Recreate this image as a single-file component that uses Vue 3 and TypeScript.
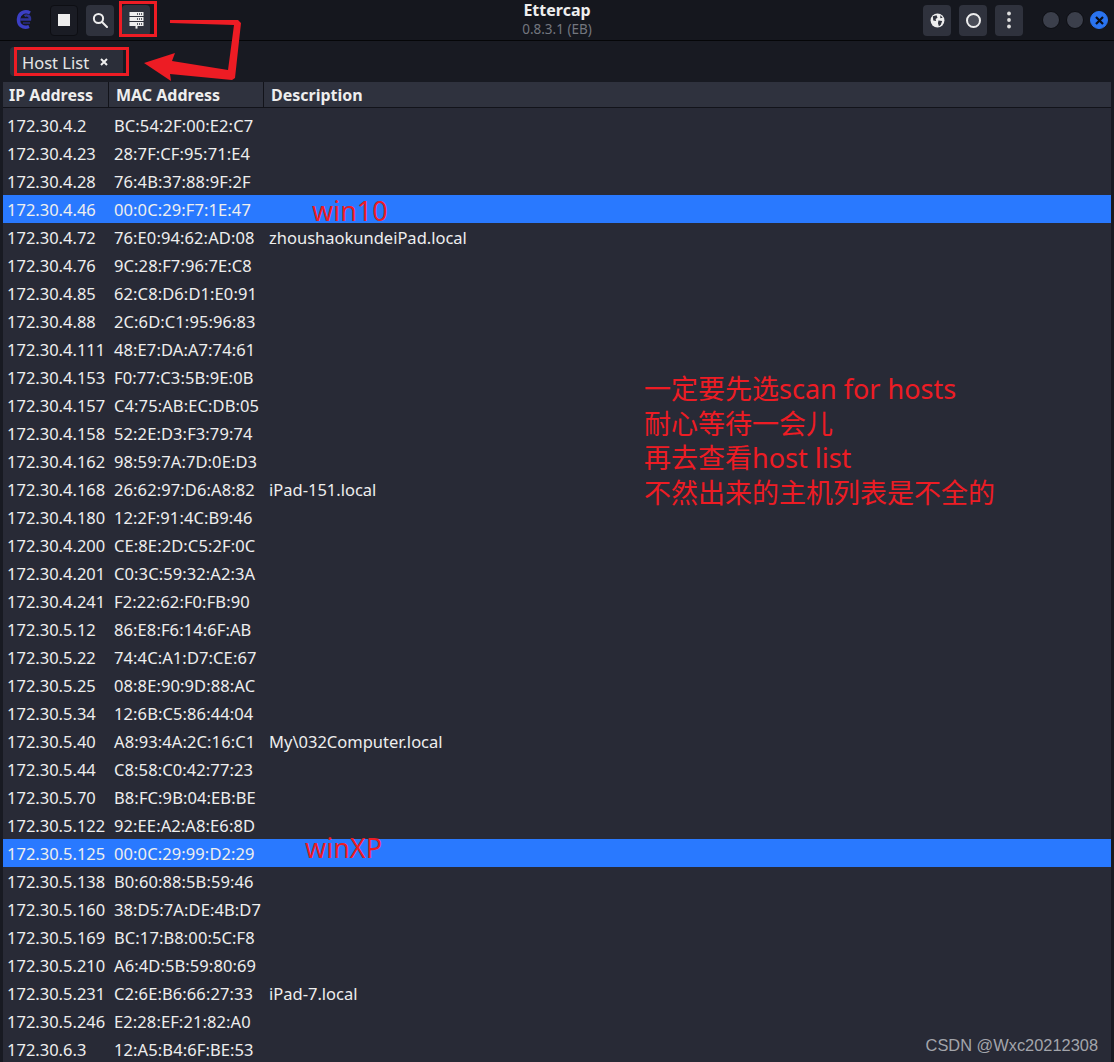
<template>
  <div class="window">
    <header class="titlebar">
      <div class="tb-left">
        <svg class="logo" width="20" height="22" viewBox="0 0 20 22">
          <path d="M15 4 C10 1 4 4 3.5 10 C3 16 8 20 14 17.5" fill="none" stroke="#3b3fc4" stroke-width="3.4" />
          <path d="M5 10.5 H15 C15.5 7 12 5.5 9.5 7" fill="none" stroke="#2f3399" stroke-width="2.4" />
          <path d="M8 14 H15" stroke="#23256b" stroke-width="2" />
        </svg>
        <button class="tool dark">
          <span class="stop"></span>
        </button>
        <button class="tool">
          <svg width="16" height="16" viewBox="0 0 16 16" fill="none" stroke="#eeeeee" stroke-width="2">
            <circle cx="6.5" cy="6.5" r="4.6" />
            <path d="M10 10 L15 15" stroke-linecap="round" />
          </svg>
        </button>
        <button class="tool">
          <svg width="15" height="17" viewBox="0 0 15 17" fill="#eeeeee">
            <path d="M0.5 0h14v4H0.5zM0.5 5h14v4H0.5zM0.5 10h14v4H0.5z" />
            <path d="M6.5 14h2v2.6h-2z" />
            <g fill="#2f323d">
              <path d="M8 1.2h1v1.6H8zM10 1.2h1v1.6h-1zM12 1.2h1v1.6h-1zM8 6.2h1v1.6H8zM10 6.2h1v1.6h-1zM12 6.2h1v1.6h-1zM8 11.2h1v1.6H8zM10 11.2h1v1.6h-1zM12 11.2h1v1.6h-1z" />
            </g>
          </svg>
        </button>
      </div>
      <div class="title">
        <div class="title-main">Ettercap</div>
        <div class="title-sub">0.8.3.1 (EB)</div>
      </div>
      <div class="tb-right">
        <button class="tool">
          <svg width="15" height="15" viewBox="0 0 16 16">
            <circle cx="8" cy="8" r="7.4" fill="#eeeeee" />
            <path d="M3 3.5 L7 2.5 L8 5 L6 6.5 L6.5 8.5 L3.5 8 Z M9 8 L13 8.5 L11.5 12.5 L9.5 14 L8.5 11 Z M11 2.5 L13.5 5 L11 5.5 Z" fill="#2f323d" />
          </svg>
        </button>
        <button class="tool">
          <span class="record"></span>
        </button>
        <button class="tool">
          <svg width="4" height="18" viewBox="0 0 4 18" fill="#dddddd">
            <circle cx="2" cy="2.5" r="1.9" />
            <circle cx="2" cy="9" r="1.9" />
            <circle cx="2" cy="15.5" r="1.9" />
          </svg>
        </button>
        <div class="win-btns">
          <span class="win-btn"></span>
          <span class="win-btn"></span>
          <span class="win-btn close">
            <svg width="9" height="9" viewBox="0 0 9 9" stroke="#0a0d14" stroke-width="2.2">
              <path d="M1 1 L8 8 M8 1 L1 8" />
            </svg>
          </span>
        </div>
      </div>
    </header>

    <div class="tabbar">
      <div class="tab">
        <span>Host List</span>
        <svg class="tab-x" width="8" height="8" viewBox="0 0 8 8" stroke="#eeeeee" stroke-width="2">
          <path d="M1 1 L7 7 M7 1 L1 7" />
        </svg>
      </div>
    </div>

    <div class="list">
      <div class="thead">
        <div class="th col-ip">IP Address</div>
        <div class="th col-mac">MAC Address</div>
        <div class="th col-desc">Description</div>
      </div>
      <div class="tbody">
        <div v-for="h in hosts" :key="h.ip" class="row" :class="{ selected: h.sel }">
          <span class="col-ip">{{ h.ip }}</span>
          <span class="col-mac">{{ h.mac }}</span>
          <span class="col-desc">{{ h.desc }}</span>
        </div>
      </div>
    </div>

    <!-- annotations drawn on top of the screenshot -->
    <div class="mark box-tool"></div>
    <div class="mark box-tab"></div>
    <svg class="arrow" width="105" height="70" viewBox="140 15 105 70">
      <path d="M170 20 L238 20 L241 23 L235 78 L232 80 L170 74 L171 81 L144 63 L175 53 L172 61 L228 70 L234 25 L170 23 Z" fill="#ed1c24" />
    </svg>
    <div class="note win10">win10</div>
    <div class="note winxp">winXP</div>
    <div class="note memo">
      <div>一定要先选scan for hosts</div>
      <div>耐心等待一会儿</div>
      <div>再去查看host list</div>
      <div>不然出来的主机列表是不全的</div>
    </div>
    <div class="watermark">CSDN @Wxc20212308</div>
  </div>
</template>

<script setup lang="ts">
interface Host {
  ip: string
  mac: string
  desc?: string
  sel?: boolean
}

const hosts: Host[] = [
  { ip: '172.30.4.2', mac: 'BC:54:2F:00:E2:C7' },
  { ip: '172.30.4.23', mac: '28:7F:CF:95:71:E4' },
  { ip: '172.30.4.28', mac: '76:4B:37:88:9F:2F' },
  { ip: '172.30.4.46', mac: '00:0C:29:F7:1E:47', sel: true },
  { ip: '172.30.4.72', mac: '76:E0:94:62:AD:08', desc: 'zhoushaokundeiPad.local' },
  { ip: '172.30.4.76', mac: '9C:28:F7:96:7E:C8' },
  { ip: '172.30.4.85', mac: '62:C8:D6:D1:E0:91' },
  { ip: '172.30.4.88', mac: '2C:6D:C1:95:96:83' },
  { ip: '172.30.4.111', mac: '48:E7:DA:A7:74:61' },
  { ip: '172.30.4.153', mac: 'F0:77:C3:5B:9E:0B' },
  { ip: '172.30.4.157', mac: 'C4:75:AB:EC:DB:05' },
  { ip: '172.30.4.158', mac: '52:2E:D3:F3:79:74' },
  { ip: '172.30.4.162', mac: '98:59:7A:7D:0E:D3' },
  { ip: '172.30.4.168', mac: '26:62:97:D6:A8:82', desc: 'iPad-151.local' },
  { ip: '172.30.4.180', mac: '12:2F:91:4C:B9:46' },
  { ip: '172.30.4.200', mac: 'CE:8E:2D:C5:2F:0C' },
  { ip: '172.30.4.201', mac: 'C0:3C:59:32:A2:3A' },
  { ip: '172.30.4.241', mac: 'F2:22:62:F0:FB:90' },
  { ip: '172.30.5.12', mac: '86:E8:F6:14:6F:AB' },
  { ip: '172.30.5.22', mac: '74:4C:A1:D7:CE:67' },
  { ip: '172.30.5.25', mac: '08:8E:90:9D:88:AC' },
  { ip: '172.30.5.34', mac: '12:6B:C5:86:44:04' },
  { ip: '172.30.5.40', mac: 'A8:93:4A:2C:16:C1', desc: 'My\\032Computer.local' },
  { ip: '172.30.5.44', mac: 'C8:58:C0:42:77:23' },
  { ip: '172.30.5.70', mac: 'B8:FC:9B:04:EB:BE' },
  { ip: '172.30.5.122', mac: '92:EE:A2:A8:E6:8D' },
  { ip: '172.30.5.125', mac: '00:0C:29:99:D2:29', sel: true },
  { ip: '172.30.5.138', mac: 'B0:60:88:5B:59:46' },
  { ip: '172.30.5.160', mac: '38:D5:7A:DE:4B:D7' },
  { ip: '172.30.5.169', mac: 'BC:17:B8:00:5C:F8' },
  { ip: '172.30.5.210', mac: 'A6:4D:5B:59:80:69' },
  { ip: '172.30.5.231', mac: 'C2:6E:B6:66:27:33', desc: 'iPad-7.local' },
  { ip: '172.30.5.246', mac: 'E2:28:EF:21:82:A0' },
  { ip: '172.30.6.3', mac: '12:A5:B4:6F:BE:53' },
]
</script>

<style scoped>
.window {
  position: relative;
  width: 1114px;
  height: 1062px;
  overflow: hidden;
  background: #181a22;
  color: #eeeeee;
  font-family: "Noto Sans", "Noto Sans CJK SC", sans-serif;
  font-size: 16.5px;
}

.titlebar {
  display: flex;
  align-items: center;
  justify-content: space-between;
  height: 40px;
  padding: 0 6px 0 0;
  background: #15171e;
  border-bottom: 1px solid #050608;
  box-sizing: content-box;
  position: relative;
}
.tb-left, .tb-right { display: flex; align-items: center; }
.tb-left { gap: 8px; padding-left: 15px; }
.tb-right { gap: 8px; }
.logo { margin-right: 7px; }

.tool {
  display: flex;
  align-items: center;
  justify-content: center;
  width: 28px;
  height: 31px;
  padding: 0;
  border: 0;
  border-radius: 4px;
  background: #2f323d;
}
.tool.dark { background: #1a1c24; border: 1px solid #0d0e13; box-sizing: border-box; }
.stop { width: 12px; height: 12px; background: #eeeeee; }
.record {
  width: 15px;
  height: 15px;
  box-sizing: border-box;
  border: 2.5px solid #eeeeee;
  border-radius: 50%;
  background: #4a4d58;
}

.title {
  position: absolute;
  left: 0;
  right: 0;
  top: 1px;
  text-align: center;
  pointer-events: none;
}
.title-main { font-size: 16px; font-weight: 700; line-height: 19px; }
.title-sub { font-size: 13.5px; line-height: 18px; color: #73767e; }

.win-btns { display: flex; align-items: center; gap: 6px; margin-left: 11px; }
.win-btn {
  width: 18px;
  height: 18px;
  box-sizing: border-box;
  border-radius: 50%;
  background: #3b3f4b;
  border: 1px solid #0d0e13;
  display: flex;
  align-items: center;
  justify-content: center;
}
.win-btn.close { background: #2a74f0; border-color: #2a74f0; }

.tabbar {
  display: flex;
  align-items: center;
  height: 41px;
  padding-left: 10px;
  background: #181a22;
}
.tab {
  display: flex;
  align-items: center;
  gap: 11px;
  height: 29px;
  width: 113px;
  box-sizing: border-box;
  padding: 1px 0 0 12px;
  background: #2b2e39;
  border-radius: 4px;
  font-size: 16.5px;
  color: #e6e6e6;
}

.list { margin: 0 3px; background: #282a36; height: 980px; }
.thead {
  display: flex;
  height: 25px;
  background: #2f323e;
  border-bottom: 1px solid #12131a;
  font-weight: 700;
  font-size: 16px;
  box-sizing: content-box;
}
.th {
  display: flex;
  align-items: center;
  padding: 1px 0 0 6px;
  box-sizing: border-box;
  border-right: 1px solid #12131a;
}
.th.col-ip { width: 106px; }
.th.col-mac { width: 155px; padding-left: 7px; }
.th.col-desc { flex: 1; border-right: 0; padding-left: 7px; }

.tbody { padding-top: 3px; }
.row {
  display: flex;
  align-items: center;
  height: 28px;
  white-space: nowrap;
}
.row.selected { background: #2979ff; }
.row .col-ip { width: 106px; padding-left: 4px; box-sizing: border-box; }
.row .col-mac { width: 155px; padding-left: 5px; box-sizing: border-box; letter-spacing: 0.1px; }
.row .col-desc { padding-left: 5px; }

.mark { position: absolute; border: 3px solid #ed1c24; box-sizing: border-box; }
.box-tool { left: 119px; top: 1px; width: 38px; height: 36px; }
.box-tab { left: 14px; top: 47px; width: 115px; height: 29px; }
.arrow { position: absolute; left: 140px; top: 15px; }

.note { position: absolute; color: #ed1c24; font-family: "Noto Sans", "Noto Sans CJK SC", sans-serif; }
.win10 { left: 312px; top: 194px; font-size: 27px; line-height: 34px; }
.winxp { left: 305px; top: 831px; font-size: 27px; line-height: 34px; }
.memo { left: 644px; top: 372px; font-size: 27px; line-height: 34.5px; white-space: nowrap; }

.watermark {
  position: absolute;
  right: 16px;
  bottom: 7px;
  font-family: "Liberation Sans", sans-serif;
  font-size: 16.4px;
  color: #a3a5ab;
}
</style>
